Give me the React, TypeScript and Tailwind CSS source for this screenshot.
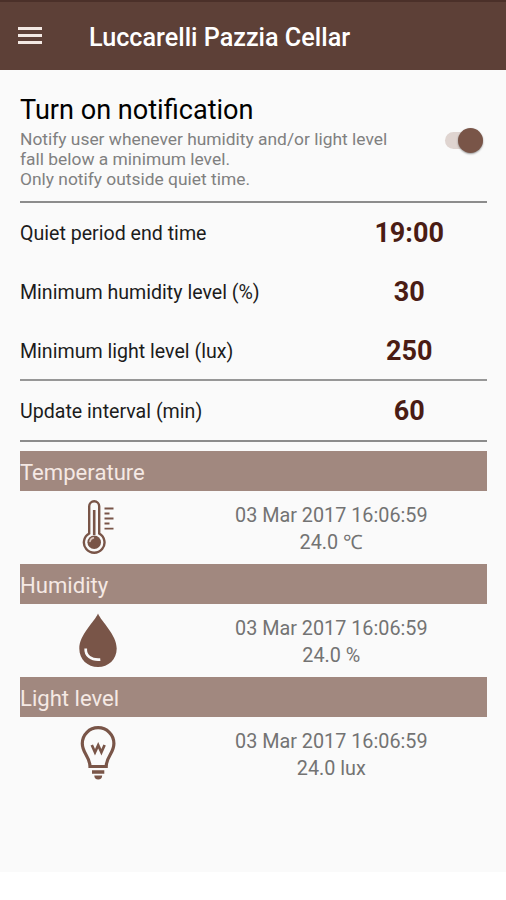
import React, { useState } from "react";

const settings = [
  { label: "Quiet period end time", value: "19:00" },
  { label: "Minimum humidity level (%)", value: "30" },
  { label: "Minimum light level (lux)", value: "250" },
];

const ThermometerIcon = () => (
  <svg width="60" height="73" viewBox="-2 1 60 73" fill="none">
    <path
      d="M19.2 43.5V16.3a5 5 0 0 1 10 0v27.2a10.3 10.3 0 1 1-10 0z"
      stroke="#795548"
      strokeWidth="2.4"
    />
    <path d="M24.2 20v25" stroke="#795548" strokeWidth="2.6" />
    <circle cx="24.2" cy="52.3" r="6.8" fill="#795548" />
    <path d="M20 51.5a4.3 4.3 0 0 1 3.4-3.6" stroke="#d9c4bb" strokeWidth="1.6" strokeLinecap="round" />
    <path
      d="M34.5 18.5h9M34.5 23.5h5M34.5 28.5h9M34.5 33.5h5M34.5 38.6h9"
      stroke="#795548"
      strokeWidth="1.9"
    />
  </svg>
);

const DropIcon = () => (
  <svg width="60" height="73" viewBox="-2 -1 60 73" fill="none">
    <path
      d="M28 8.5C31.5 17 46.7 29.5 46.7 43.5C46.7 54.5 38.3 62 28 62S9.3 54.5 9.3 43.5C9.3 29.5 24.5 17 28 8.5z"
      fill="#795548"
    />
    <path d="M15.7 43.5C15.2 50.5 21 55.5 30.3 54.6" stroke="#fafafa" strokeWidth="2.7" />
  </svg>
);

const BulbIcon = () => (
  <svg width="60" height="73" viewBox="-2 2 60 73" fill="none">
    <path
      d="M20 51.5C20 41.5 12.3 38.5 12.3 28.5a15.8 15.8 0 0 1 31.6 0C43.9 38.5 36.2 41.5 36.2 51.5z"
      stroke="#795548"
      strokeWidth="3.2"
    />
    <path d="M21.8 30l3.2 7.2 3.2-7 3.2 7 3.2-7.2" stroke="#795548" strokeWidth="2.7" />
    <path
      d="M22 55.3h12.3v3.5H22zM24.3 60.5h7.9c0 2.5-1.5 4-3.95 4s-3.95-1.5-3.95-4z"
      fill="#795548"
    />
  </svg>
);

const sensors = [
  { name: "Temperature", value: "24.0 ℃", Icon: ThermometerIcon },
  { name: "Humidity", value: "24.0 %", Icon: DropIcon },
  { name: "Light level", value: "24.0 lux", Icon: BulbIcon },
];

const SettingRow = ({ label, value }: { label: string; value: string }) => (
  <div className="grid grid-cols-3 items-center h-[59px]">
    <div className="col-span-2 pt-[2px] text-[19.6px] text-[#1c1c1c] whitespace-nowrap">{label}</div>
    <div className="pt-[2px] text-center text-[27px] font-bold text-[#4a1c14]">{value}</div>
  </div>
);

const App = () => {
  const [enabled, setEnabled] = useState(true);

  return (
    <div className="h-[900px] bg-white font-[Roboto,sans-serif]">
      <div className="h-[872px] bg-[#fafafa]">
        <header className="flex items-center h-[70px] bg-[#5d4037] border-t-2 border-[#4b3029] pl-[18px]">
          <button className="flex flex-col gap-[4px] mb-[2px]" aria-label="Open menu">
            <span className="block w-6 h-[3px] bg-[#f3e9e4]" />
            <span className="block w-6 h-[3px] bg-[#f3e9e4]" />
            <span className="block w-6 h-[3px] bg-[#f3e9e4]" />
          </button>
          <h1 className="ml-[47px] pt-[3px] text-[25.2px] font-medium text-white whitespace-nowrap">
            Luccarelli Pazzia Cellar
          </h1>
        </header>

        <main className="pl-5 pr-[19px]">
          {/* Notification switch */}
          <section className="flex justify-between h-[131px] pt-[23px]">
            <div>
              <h2 className="text-[27.1px] leading-[34px] text-black whitespace-nowrap">
                Turn on notification
              </h2>
              <p className="mt-[2px] text-[17.4px] leading-[20px] text-[#808080] whitespace-nowrap">
                Notify user whenever humidity and/or light level
                <br />
                fall below a minimum level.
                <br />
                Only notify outside quiet time.
              </p>
            </div>
            <button
              className="flex items-center justify-end w-[38px] h-[26px] mt-[34px] mr-1"
              onClick={() => setEnabled(!enabled)}
              aria-pressed={enabled}
              aria-label="Turn on notification"
            >
              <span className="flex items-center justify-end w-[38px] h-[17px] rounded-full bg-[#dfd4d0]">
                <span className="w-[25px] h-[25px] shrink-0 rounded-full bg-[#795548] shadow-[0_1px_2px_rgba(0,0,0,0.4)]" />
              </span>
            </button>
          </section>

          <hr className="border-0 h-[2px] bg-[#8c8c8c]" />
          {settings.map((s) => (
            <SettingRow key={s.label} label={s.label} value={s.value} />
          ))}
          <hr className="-mt-px border-0 h-[2px] bg-[#979797]" />
          <SettingRow label="Update interval (min)" value="60" />
          <hr className="border-0 h-[2px] bg-[#8c8c8c]" />

          {/* Sensor readings */}
          <div className="mt-[9px]">
            {sensors.map(({ name, value, Icon }) => (
              <section key={name} className="h-[113px]">
                <h3 className="flex items-center h-[40px] pt-[3px] bg-[#a1887f] text-[22.1px] text-[#f5e9e4]">
                  {name}
                </h3>
                <div className="grid grid-cols-3 h-[73px]">
                  <div className="flex justify-center">
                    <Icon />
                  </div>
                  <div className="col-span-2 pt-[12px] text-center text-[19.8px] leading-[26.5px] text-[#737373]">
                    <p>03 Mar 2017 16:06:59</p>
                    <p>{value}</p>
                  </div>
                </div>
              </section>
            ))}
          </div>
        </main>
      </div>
    </div>
  );
};

export default App;
